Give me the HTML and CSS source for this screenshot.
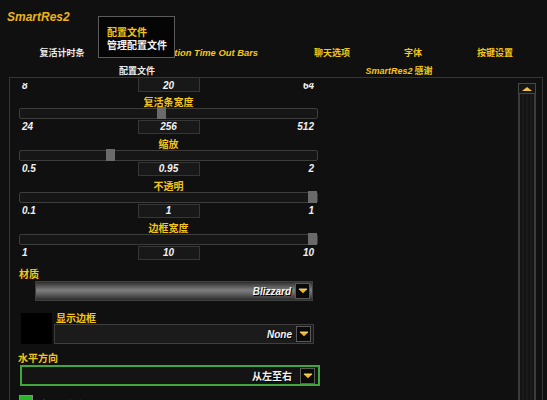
FILE: index.html
```html
<!DOCTYPE html>
<html lang="zh">
<head>
    <meta charset="UTF-8">
    <title>SmartRes2</title>
    <link rel="stylesheet" href="styles.css">
</head>
<body>
    <div class="frame">
        <div class="header">
            <h1 class="title">SmartRes2</h1>
            <div class="tabs">
                <span class="tab tab-1 tab-active">复活计时条</span>
                <span class="tab tab-2 tab-latin">Resurrection Time Out Bars</span>
                <span class="tab tab-3">聊天选项</span>
                <span class="tab tab-4">字体</span>
                <span class="tab tab-5">按键设置</span>
            </div>
            <div class="tabs tabs-second">
                <span class="tab tab-6 tab-active">配置文件</span>
                <span class="tab tab-7"><i>SmartRes2</i> 感谢</span>
            </div>
        </div>

        <!-- profile dropdown menu, open over the tabs -->
        <div class="menu">
            <div class="menu-item menu-item-current">配置文件</div>
            <div class="menu-item">管理配置文件</div>
        </div>

        <div class="panel">
            <div class="content">
                <div class="value-row value-row-top">
                    <span class="min">8</span><span class="box">20</span><span class="max">64</span>
                </div>

                <div class="slider">
                    <div class="slider-label">复活条宽度</div>
                    <div class="track"><span class="thumb" style="--p: 0.475"></span></div>
                    <div class="value-row">
                        <span class="min">24</span><span class="box">256</span><span class="max">512</span>
                    </div>
                </div>

                <div class="slider">
                    <div class="slider-label">缩放</div>
                    <div class="track"><span class="thumb" style="--p: 0.3"></span></div>
                    <div class="value-row">
                        <span class="min">0.5</span><span class="box">0.95</span><span class="max">2</span>
                    </div>
                </div>

                <div class="slider">
                    <div class="slider-label">不透明</div>
                    <div class="track"><span class="thumb" style="--p: 1"></span></div>
                    <div class="value-row">
                        <span class="min">0.1</span><span class="box">1</span><span class="max">1</span>
                    </div>
                </div>

                <div class="slider">
                    <div class="slider-label">边框宽度</div>
                    <div class="track"><span class="thumb" style="--p: 1"></span></div>
                    <div class="value-row">
                        <span class="min">1</span><span class="box">10</span><span class="max">10</span>
                    </div>
                </div>

                <div class="field-label">材质</div>
                <div class="dropdown dropdown-texture">
                    <span class="dropdown-text">Blizzard</span>
                    <span class="dropdown-btn">
                        <svg width="10" height="6" viewBox="0 0 10 6"><path d="M0.5 1 H9.5 L5 5.2 Z" fill="#f2b91c"/><path d="M1 1 H9" stroke="#fff3b0" stroke-width="0.8"/></svg>
                    </span>
                </div>

                <div class="border-row">
                    <div class="swatch"></div>
                    <div class="border-field">
                        <div class="field-label">显示边框</div>
                        <div class="dropdown dropdown-plain">
                            <span class="dropdown-text">None</span>
                            <span class="dropdown-btn">
                                <svg width="10" height="6" viewBox="0 0 10 6"><path d="M0.5 1 H9.5 L5 5.2 Z" fill="#f2b91c"/><path d="M1 1 H9" stroke="#fff3b0" stroke-width="0.8"/></svg>
                            </span>
                        </div>
                    </div>
                </div>

                <div class="field-label field-label-dir">水平方向</div>
                <div class="dropdown dropdown-active">
                    <span class="dropdown-text dropdown-text-cjk">从左至右</span>
                    <span class="dropdown-btn">
                        <svg width="10" height="6" viewBox="0 0 10 6"><path d="M0.5 1 H9.5 L5 5.2 Z" fill="#f2b91c"/><path d="M1 1 H9" stroke="#fff3b0" stroke-width="0.8"/></svg>
                    </span>
                </div>

                <div class="check-row">
                    <span class="check"></span>
                    <span class="check-label">计时条颜色</span>
                </div>
            </div>

            <div class="scrollbar">
                <div class="scroll-up"></div>
                <div class="scroll-track"></div>
            </div>
        </div>
    </div>
</body>
</html>
```

FILE: styles.css
```css
body{
    margin: 0;
    height: 400px;
    overflow: hidden;
    background: #101010;
    font-family: "Liberation Sans", "Noto Sans CJK SC", sans-serif;
    font-weight: bold;
    color: #f5c518;
}

.frame{
    position: relative;
}

/*****
Header
******/
.header{
    height: 77px;
}

.title{
    margin: 0;
    padding: 10px 0 0 7px;
    height: 14px;
    line-height: 14px;
    font-size: 12px;
    font-style: italic;
    color: #eab21c;
}

.tabs{
    display: flex;
    margin-top: 23px;
    height: 12px;
    line-height: 12px;
    font-size: 9px;
    padding-left: 22px;
}

.tabs-second{
    margin-top: 6px;
    padding-left: 97px;
}

.tab{
    text-align: center;
    white-space: nowrap;
    font-family: "Noto Sans CJK SC", sans-serif;
}

.tab-active{
    color: #ececec;
}

.tab-1{ width: 80px; }
.tab-2{
    width: 156px;
    text-align: right;
    font-family: "Liberation Sans", sans-serif;
    font-style: italic;
    font-size: 9.4px;
}
.tab-3{ width: 84px; margin-left: 32px; }
.tab-4{ width: 78px; }
.tab-5{ width: 86px; }
.tab-6{ width: 80px; }
.tab-7{ width: 120px; margin-left: 162px; }
.tab-7 i{
    font-family: "Liberation Sans", sans-serif;
    font-size: 9px;
}

/*****
Menu
******/
.menu{
    position: absolute;
    left: 98px;
    top: 16px;
    width: 75px;
    height: 40px;
    border: 1px solid #5b5b5b;
    background: #050505;
    font-family: "Noto Sans CJK SC", sans-serif;
    font-size: 10px;
    color: #f4f4f4;
}

.menu-item{
    padding-left: 8px;
    line-height: 13px;
}

.menu-item:first-child{
    margin-top: 8px;
}

.menu-item-current{
    color: #f5c518;
}

/*****
Panel
******/
.panel{
    display: flex;
    margin-left: 9px;
    width: 532px;
    height: 330px;
    border: 1px solid #363636;
    border-bottom: none;
    overflow: hidden;
}

.content{
    width: 299px;
    padding-left: 9px;
    margin-right: 200px;
}

.slider-label{
    height: 12px;
    margin-top: 4px;
    line-height: 12px;
    text-align: center;
    font-family: "Noto Sans CJK SC", sans-serif;
    font-size: 10px;
}

.track{
    position: relative;
    height: 9px;
    border: 1px solid #3d3d3d;
    border-radius: 2px;
    background: #161616;
}

.thumb{
    position: absolute;
    top: -2px;
    left: calc(var(--p) * (100% - 9px));
    width: 9px;
    height: 12px;
    background: #6a6a6a;
}

.value-row{
    display: grid;
    grid-template-columns: 1fr 62px 1fr;
    height: 14px;
    margin-top: 1px;
    line-height: 14px;
    font-size: 10px;
    font-style: italic;
    color: #f2f2f2;
}

/* first row is scrolled half out of view */
.value-row-top{
    margin-top: 0;
}

.value-row-top .min,
.value-row-top .max{
    height: 8px;
    margin-top: 5px;
    line-height: 6px;
    overflow: hidden;
}

.value-row-top .box{
    height: 13px;
    line-height: 15px;
    border-top: none;
    overflow: hidden;
}

.min{
    padding-left: 3px;
}

.max{
    padding-right: 4px;
    text-align: right;
}

.box{
    height: 12px;
    line-height: 12px;
    text-align: center;
    border: 1px solid #363636;
    background: #181818;
}

/*****
Dropdowns
******/
.field-label{
    height: 12px;
    line-height: 12px;
    margin-top: 8px;
    font-family: "Noto Sans CJK SC", sans-serif;
    font-size: 10px;
}

.dropdown{
    display: flex;
    align-items: center;
    justify-content: flex-end;
    height: 18px;
    margin-top: 1px;
    border: 1px solid #3e3e3e;
    font-size: 10px;
    font-style: italic;
    color: #f4f4f4;
}

.dropdown-texture{
    margin-left: 16px;
    width: 276px;
    background: linear-gradient(to bottom, #2e2e2e, #7e7e7e 45%, #6c6c6c 60%, #2c2c2c);
}

.dropdown-text{
    padding-right: 4px;
    text-shadow: 1px 1px 0 #000;
}

.dropdown-text-cjk{
    font-family: "Noto Sans CJK SC", sans-serif;
    font-style: normal;
    padding-right: 8px;
}

.dropdown-btn{
    display: flex;
    align-items: center;
    justify-content: center;
    width: 13px;
    height: 14px;
    margin-right: 2px;
    border: 1px solid #5a5a5a;
    background: #0a0a0a;
}

.border-row{
    display: flex;
    margin-top: 11px;
}

.swatch{
    width: 31px;
    height: 31px;
    margin: 1px 0 0 2px;
    background: #000;
}

.border-field{
    margin-left: 2px;
}

.border-field .field-label{
    margin: 0 0 0 2px;
    height: 11px;
    line-height: 11px;
}

.dropdown-plain{
    width: 258px;
    background: #1b1b1b;
}

.field-label-dir{
    margin-top: 8px;
    margin-left: -1px;
}

.dropdown-active{
    width: 296px;
    height: 17px;
    margin-left: 1px;
    border: 2px solid #3ea83e;
    background: #141414;
}

.dropdown-active .dropdown-btn{
    margin-right: 3px;
}

.check-row{
    display: flex;
    align-items: flex-start;
    margin-top: 9px;
}

.check{
    width: 12px;
    height: 12px;
    border: 1px solid #8a8a8a;
    background: #29b529;
}

.check-label{
    margin-left: 4px;
    margin-top: 2px;
    font-family: "Noto Sans CJK SC", sans-serif;
    font-size: 10px;
    color: #f2f2f2;
}

/*****
Scrollbar
******/
.scrollbar{
    display: flex;
    flex-direction: column;
    width: 18px;
    margin-top: 5px;
}

.scroll-up{
    display: flex;
    align-items: center;
    justify-content: center;
    height: 9px;
    border: 1px solid #474747;
    background: #161616;
}

.scroll-up::before{
    content: "";
    border-left: 5px solid transparent;
    border-right: 5px solid transparent;
    border-bottom: 4px solid #f2c23a;
}

.scroll-track{
    flex: 1;
    border-left: 2px solid #3c3c3c;
    border-right: 2px solid #3c3c3c;
    background: repeating-linear-gradient(90deg, #141414 0 2px, #1b1b1b 2px 4px);
}
```
